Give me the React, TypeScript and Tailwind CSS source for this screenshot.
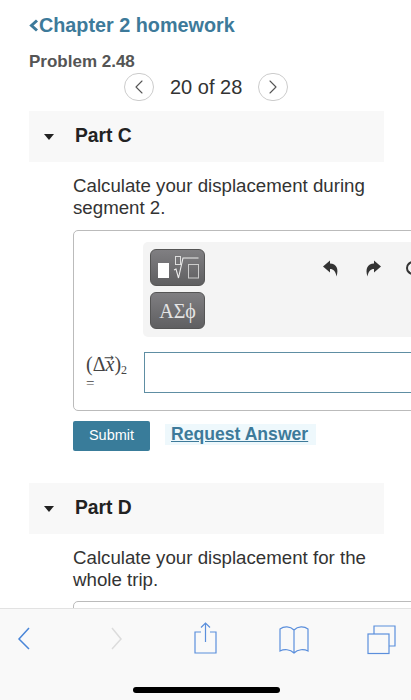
import React from "react";
import { ChevronLeft, ChevronRight } from "lucide-react";

const PartHeader = ({ label }: { label: string }) => (
  <div className="flex items-center h-[51px] w-[355px] ml-[29px] bg-[#f8f8f8]">
    <div className="ml-[15px] w-0 h-0 border-x-[5.5px] border-x-transparent border-t-[6px] border-t-[#222]"></div>
    <span className="ml-[21px] text-[19.3px] font-bold text-[#222]">{label}</span>
  </div>
);

const TemplatesIcon = () => (
  <svg width="55" height="37" viewBox="0 0 55 37" fill="none" className="shrink-0">
    <rect x="8" y="14" width="11" height="15" fill="#fff" />
    <rect x="25.5" y="7.5" width="5" height="8" stroke="#ddd" strokeWidth="1" />
    <path d="M24 21 L26 20 L28.5 29 L33 9 H48.5" stroke="#eee" strokeWidth="1.1" />
    <rect x="38.5" y="15.5" width="10" height="13.5" stroke="#ccc" strokeWidth="1" />
  </svg>
);

const ToolbarButton = ({ children }: { children: React.ReactNode }) => (
  <div className="flex items-center justify-center w-[55px] h-[37px] rounded-[6px] border border-[#555] bg-gradient-to-b from-[#807f82] to-[#5f5f61]">
    {children}
  </div>
);

const Undo = ({ flip }: { flip?: boolean }) => (
  <svg width="16" height="17" viewBox="0 0 16 17" className={flip ? "-scale-x-100" : ""}>
    <path d="M7 0.5 L0 6.5 L7 12.5 V9 C10.5 9 12.5 11 13.5 16.5 C16 9 13.5 3.5 7 3.5 Z" fill="#333" />
  </svg>
);

const App = () => {
  return (
    <div className="relative w-[411px] h-[700px] overflow-hidden bg-white font-['Liberation_Sans',Arial,sans-serif]">
      <div className="flex items-center ml-[29px] pt-[14px] h-[36px] text-[19.8px] font-bold text-[#3d7a9a] leading-[22px]">
        <svg width="10" height="13" viewBox="0 0 10 13" fill="none" className="mt-[1px]">
          <path d="M8 1.5 L2.5 6.5 L8 11.5" stroke="#3d7a9a" strokeWidth="3" />
        </svg>
        <span>Chapter 2 homework</span>
      </div>

      <div className="ml-[29px] mt-[16px] text-[17px] font-bold text-[#555] leading-[20px]">Problem 2.48</div>

      <div className="flex items-center ml-[124px] h-[30px] text-[#333]">
        <div className="flex items-center justify-center w-[30px] h-[28px] rounded-full border border-[#ccc]">
          <ChevronLeft size={24} strokeWidth={1.1} color="#555" />
        </div>
        <span className="ml-[16px] w-[72px] text-[20px] leading-[24px] whitespace-nowrap">20 of 28</span>
        <div className="flex items-center justify-center ml-[16px] w-[30px] h-[28px] rounded-full border border-[#ccc]">
          <ChevronRight size={24} strokeWidth={1.1} color="#555" />
        </div>
      </div>

      <div className="mt-[9px]">
        <PartHeader label="Part C" />
      </div>

      <p className="ml-[73px] mt-[13px] w-[310px] text-[18.7px] leading-[22px] text-[#333]">
        Calculate your displacement during segment 2.
      </p>

      <div className="ml-[73px] mt-[11px] w-[360px] h-[181px] rounded-[5px] border border-[#bbb] pl-[69px] pt-[11px]">
        <div className="flex w-[300px] h-[95px] rounded-[5px] bg-[#f4f4f4] pl-[7px] pt-[7px]">
          <div className="flex flex-col gap-[6px] shrink-0">
            <ToolbarButton>
              <TemplatesIcon />
            </ToolbarButton>
            <ToolbarButton>
              <span className="font-['Liberation_Serif',serif] text-[20px] text-[#e4e4e4] whitespace-nowrap">ΑΣϕ</span>
            </ToolbarButton>
          </div>
          <div className="flex ml-[118px] mt-[11px] gap-[26px] h-[17px] items-start shrink-0">
            <Undo />
            <Undo flip />
            <div className="-ml-[1px] mt-[1px] w-[14px] h-[14px] shrink-0 rounded-full border-2 border-[#333] border-r-transparent"></div>
          </div>
        </div>

        <div className="flex mt-[15px] -ml-[57px]">
          <div className="w-[58px] h-[41px] shrink-0 font-['Liberation_Serif',serif] text-[#444]">
            <div className="text-[20px] leading-[24px] whitespace-nowrap">
              (Δ<i>x</i>⃗)<sub className="text-[12px]">2</sub>
            </div>
            <div className="text-[15px] leading-[14px]">=</div>
          </div>
          <div className="w-[300px] h-[41px] shrink-0 border border-[#5e8ea3] bg-white"></div>
        </div>
      </div>

      <div className="flex items-center ml-[73px] mt-[10px]">
        <div className="flex items-center justify-center w-[77px] h-[30px] rounded-[2px] bg-[#397c9a] text-[14.5px] text-white">
          Submit
        </div>
        <div className="ml-[15px] -mt-[3px] pl-[6px] pr-[8px] h-[21px] flex items-center bg-[#eef8fc] text-[17.6px] font-bold text-[#3d7a9a] underline whitespace-nowrap">
          Request Answer
        </div>
      </div>

      <div className="mt-[32px]">
        <PartHeader label="Part D" />
      </div>

      <p className="ml-[73px] mt-[13px] w-[310px] text-[18.7px] leading-[22px] text-[#333]">
        Calculate your displacement for the whole trip.
      </p>

      <div className="ml-[73px] mt-[10px] w-[360px] h-[40px] rounded-[5px] border border-[#bbb]"></div>

      {/* browser toolbar over the page */}
      <div className="absolute left-0 right-0 bottom-0 h-[92px] bg-[#f9f9f9] border-t border-[#e2e2e2]">
        <svg width="411" height="60" viewBox="0 0 411 60" fill="none" stroke="#5b8fdc" strokeWidth="1.2">
          <path d="M29 19 L19 30 L29 40" strokeWidth="1.5" stroke="#4a86d8" />
          <path d="M112 19 L121 30 L112 40" stroke="#dcdcdc" strokeWidth="1.5" />
          <path d="M201 23 H195 V44 H216 V23 H210" />
          <path d="M205.5 33 V14.5 M201 18.5 L205.5 14 L210 18.5" />
          <path d="M294 21 C290 17 284 17 280 20 V42 C284 40 290 40 294 44 C298 40 304 40 308 42 V20 C304 17 298 17 294 21 Z M294 21 V44" />
          <rect x="368" y="25" width="21" height="19.5" />
          <path d="M374 25 V17 H395 V37 H389" />
        </svg>
        <div className="absolute left-[133px] top-[78px] w-[147px] h-[6px] rounded-full bg-black"></div>
      </div>
    </div>
  );
};

export default App;
